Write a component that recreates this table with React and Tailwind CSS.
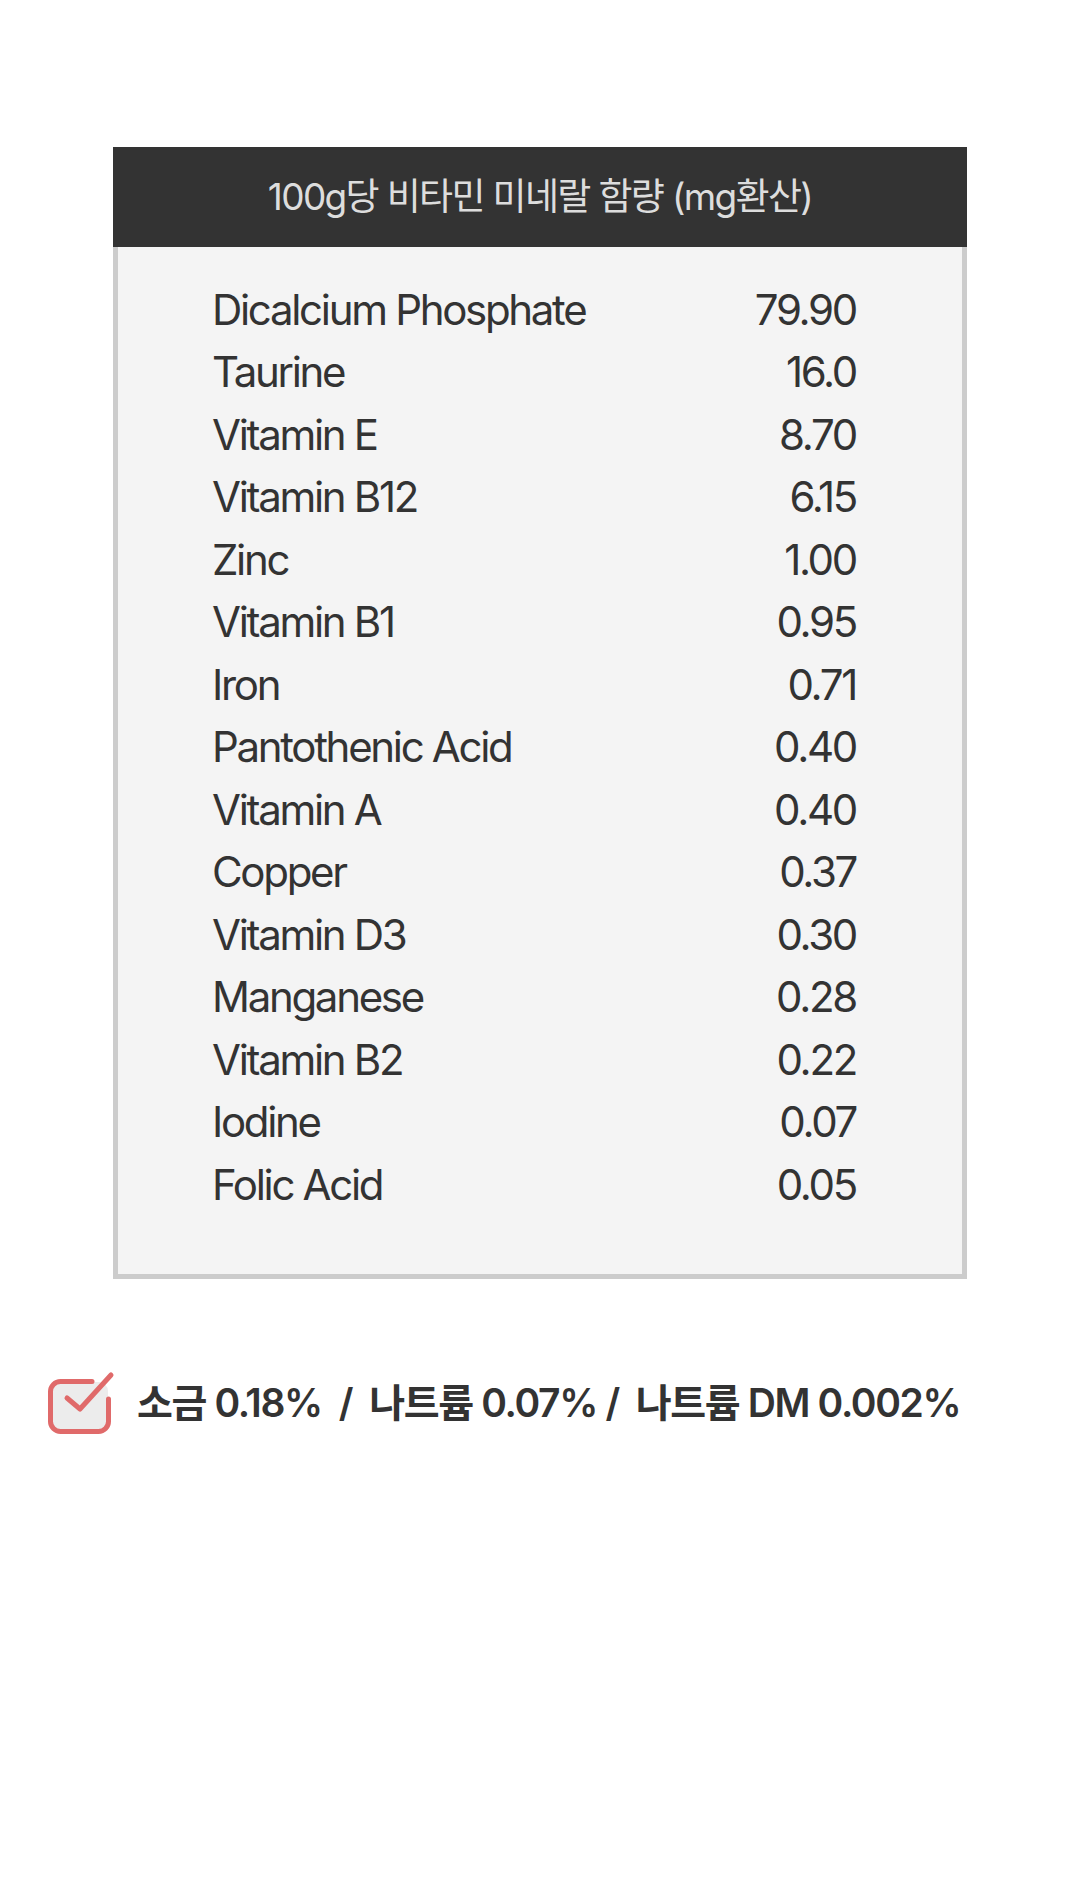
import React from 'react';

const rows = [
  ['Dicalcium Phosphate', '79.90'],
  ['Taurine', '16.0'],
  ['Vitamin E', '8.70'],
  ['Vitamin B12', '6.15'],
  ['Zinc', '1.00'],
  ['Vitamin B1', '0.95'],
  ['Iron', '0.71'],
  ['Pantothenic Acid', '0.40'],
  ['Vitamin A', '0.40'],
  ['Copper', '0.37'],
  ['Vitamin D3', '0.30'],
  ['Manganese', '0.28'],
  ['Vitamin B2', '0.22'],
  ['Iodine', '0.07'],
  ['Folic Acid', '0.05'],
];

function CheckIcon() {
  return (
    <svg width="70" height="66" viewBox="0 0 70 66" fill="none">
      <rect x="6" y="11" width="57" height="49" rx="9" fill="#ececec" />
      <path
        d="M47 10.5 H15.5 A10 10 0 0 0 5.5 20.5 V50.5 A10 10 0 0 0 15.5 60.5 H53.5 A10 10 0 0 0 63.5 50.5 V28"
        stroke="#e06a6a"
        strokeWidth="5"
        strokeLinecap="round"
      />
      <path
        d="M22 27 L35 38 L66 4"
        stroke="#e06a6a"
        strokeWidth="5"
        strokeLinecap="round"
        strokeLinejoin="round"
      />
    </svg>
  );
}

export default function App() {
  return (
    <div
      className="w-[1080px] h-[1900px] bg-white pt-[147px]"
      style={{ fontFamily: 'Inter, "Noto Sans CJK KR", sans-serif' }}
    >
      <div className="mx-auto w-[854px]">
        <div className="h-[100px] bg-[#333333] flex items-center justify-center text-[#dddddd] text-[37px] tracking-[-0.045em]">
          100g당 비타민 미네랄 함량 (mg환산)
        </div>
        <div className="bg-[#f4f4f4] border-[5px] border-t-0 border-[#cccccc] pl-[94px] pr-[106px] pt-[31px] pb-[58px]">
          {rows.map(([name, value]) => (
            <div
              key={name}
              className="flex justify-between h-[62.5px] items-center text-[42px] text-[#333333] tracking-[-0.055em]"
            >
              <span>{name}</span>
              <span>{value}</span>
            </div>
          ))}
        </div>
      </div>
      <div className="flex items-center gap-[22px] pl-[45px] mt-[92px]">
        <CheckIcon />
        <span className="text-[39px] font-semibold text-[#333333] tracking-[-0.035em] whitespace-pre">
          {'소금 0.18%  /  나트륨 0.07% /  나트륨 DM 0.002%'}
        </span>
      </div>
    </div>
  );
}
